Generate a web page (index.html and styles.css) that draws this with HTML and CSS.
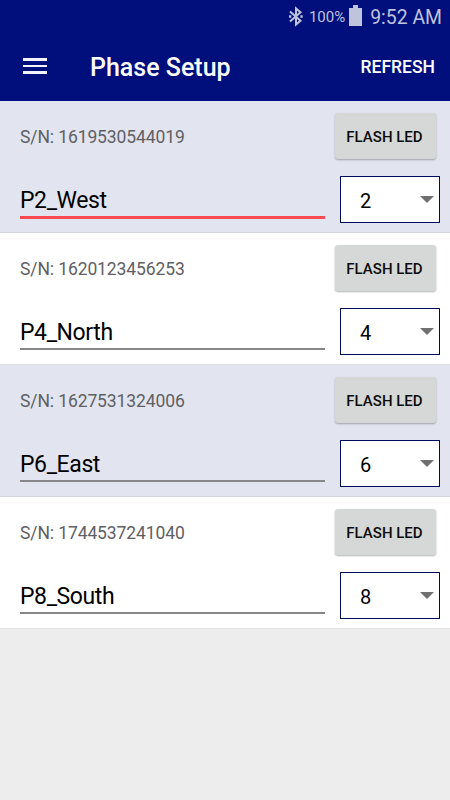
FILE: index.html
```html
<!DOCTYPE html>
<html lang="en">
<head>
  <meta charset="UTF-8">
  <meta name="viewport" content="width=device-width, initial-scale=1.0">
  <title>Phase Setup</title>
  <link rel="stylesheet" href="styles.css">
</head>
<body>

<header class="header">
  <div class="status-bar">
    <svg class="bluetooth" viewBox="0 0 14 21" width="14" height="21">
      <path d="M1 5.5 L11.5 14.7 L7 18.5 V2.5 L11.5 6.3 L1 15.5" fill="none" stroke="currentColor" stroke-width="2"/>
      <path d="M0 9.3h2.3v2.4H0zM11.4 9.3h2.3v2.4h-2.3z" fill="currentColor"/>
    </svg>
    <span class="battery-level">100%</span>
    <svg class="battery" viewBox="0 0 13 21" width="13" height="21">
      <path d="M0 3h4V0h5v3h4v18H0z" fill="currentColor"/>
    </svg>
    <span class="clock">9:52 AM</span>
  </div>
  <div class="toolbar">
    <button class="menu-btn" aria-label="Menu">
      <span></span>
      <span></span>
      <span></span>
    </button>
    <h1 class="title">Phase Setup</h1>
    <button class="refresh-btn">REFRESH</button>
  </div>
</header>

<main class="phase-list">
  <section class="phase">
    <div class="phase-top">
      <span class="serial">S/N: 1619530544019</span>
      <button class="flash-btn">FLASH LED</button>
    </div>
    <div class="phase-bottom">
      <div class="phase-name active">P2_West</div>
      <div class="phase-select"><span>2</span><i class="arrow"></i></div>
    </div>
  </section>

  <section class="phase">
    <div class="phase-top">
      <span class="serial">S/N: 1620123456253</span>
      <button class="flash-btn">FLASH LED</button>
    </div>
    <div class="phase-bottom">
      <div class="phase-name">P4_North</div>
      <div class="phase-select"><span>4</span><i class="arrow"></i></div>
    </div>
  </section>

  <section class="phase">
    <div class="phase-top">
      <span class="serial">S/N: 1627531324006</span>
      <button class="flash-btn">FLASH LED</button>
    </div>
    <div class="phase-bottom">
      <div class="phase-name">P6_East</div>
      <div class="phase-select"><span>6</span><i class="arrow"></i></div>
    </div>
  </section>

  <section class="phase">
    <div class="phase-top">
      <span class="serial">S/N: 1744537241040</span>
      <button class="flash-btn">FLASH LED</button>
    </div>
    <div class="phase-bottom">
      <div class="phase-name">P8_South</div>
      <div class="phase-select"><span>8</span><i class="arrow"></i></div>
    </div>
  </section>
</main>

</body>
</html>
```

FILE: styles.css
```css
* {
  box-sizing: border-box;
}

body {
  margin: 0;
  font-family: Roboto, sans-serif;
  background-color: #ededed;
  color: #000;
}

button {
  font-family: inherit;
  border: none;
  padding: 0;
  cursor: pointer;
}

.header {
  height: 101px;
  background-color: #000f7b;
  color: white;
}

/* Status bar */
.status-bar {
  display: flex;
  align-items: center;
  justify-content: flex-end;
  height: 33px;
  padding-right: 8px;
  color: #bfc3de;
}

.battery-level {
  margin-left: 6px;
  font-size: 15px;
}

.battery {
  margin: 0 8px 2px 4px;
}

.clock {
  padding-top: 1px;
  font-size: 19.4px;
}

/* Toolbar */
.toolbar {
  display: flex;
  align-items: center;
  height: 68px;
  padding: 0 15px 0 23px;
}

.menu-btn {
  display: flex;
  flex-direction: column;
  gap: 4px;
  width: 24px;
  margin-bottom: 2px;
  background: none;
}

.menu-btn span {
  width: 24px;
  height: 2.67px;
  background-color: #f3f3fa;
}

.title {
  flex: 1;
  margin: 0 0 0 43px;
  font-size: 25px;
  font-weight: 500;
}

.refresh-btn {
  background: none;
  color: white;
  font-size: 17.5px;
  font-weight: 500;
}

/* Phase rows */
.phase {
  height: 132px;
  padding: 12px 10px 0 20px;
  background-color: white;
  border-bottom: 1px solid #e0e0e4;
}

.phase:nth-child(odd) {
  background-color: #e2e5ef;
  border-bottom-color: #d3d5df;
}

.phase-top {
  display: flex;
  align-items: center;
  justify-content: space-between;
  height: 47px;
  padding-right: 4px;
}

.serial {
  color: #5f6064;
  font-size: 17.5px;
  letter-spacing: -0.1px;
}

.flash-btn {
  width: 101px;
  height: 46px;
  margin-bottom: 1px;
  padding: 2px 2px 0 0;
  border-radius: 3px;
  background-color: #d6d8d7;
  box-shadow: 0 1px 2px rgba(0, 0, 0, 0.3);
  color: #0c0c0c;
  font-size: 15px;
  font-weight: 500;
}

.phase-bottom {
  display: flex;
  gap: 15px;
  margin-top: 16px;
}

.phase-name {
  flex: 1;
  height: 42px;
  border-bottom: 2px solid #87878a;
  font-size: 23px;
  line-height: 49px;
  letter-spacing: -0.4px;
}

.phase-name.active {
  height: 43px;
  border-bottom: 3px solid #fb4a50;
}

.phase-select {
  display: flex;
  align-items: center;
  justify-content: space-between;
  width: 100px;
  height: 47px;
  padding: 2px 5px 0 19px;
  border: 1px solid #000b5c;
  background-color: white;
  font-size: 20px;
}

.arrow {
  margin-bottom: 3px;
  border: 7px solid transparent;
  border-top-color: #707070;
  border-bottom: none;
}
```
